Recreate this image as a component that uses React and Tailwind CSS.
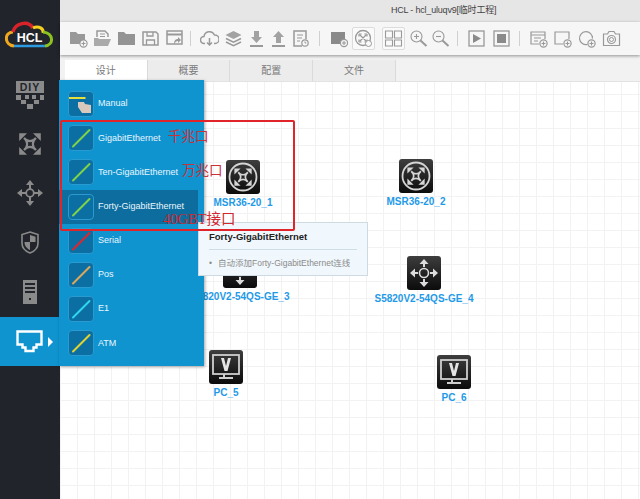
const menuItems = [
  { name: 'Manual', manual: true },
  { name: 'GigabitEthernet', line: '#7ed348' },
  { name: 'Ten-GigabitEthernet', line: '#7ed348' },
  { name: 'Forty-GigabitEthernet', line: '#7ed348', active: true },
  { name: 'Serial', line: '#e0262c' },
  { name: 'Pos', line: '#dda75a' },
  { name: 'E1', line: '#2fd6ee' },
  { name: 'ATM', line: '#e3d32e' },
];

function Tb({ w = 'w-[24px]', box, children }) {
  return (
    <div className={`${w} h-[24px] flex-shrink-0 flex items-center justify-center`}>
      <div className={box ? 'w-[23px] h-[23px] flex items-center justify-center rounded-[2px] border border-[#dcdcdc] bg-[#fafafa]' : 'flex items-center justify-center'}>
        <svg width="19" height="19" viewBox="0 0 19 19" fill="none" stroke="#999999" strokeWidth="1.5">
          {children}
        </svg>
      </div>
    </div>
  );
}

function Sep({ className }) {
  return <div className={`w-px h-[15px] bg-[#d0d0d0] flex-shrink-0 ${className}`} />;
}

const Plus = ({ x = 14.5, y = 14.5 }) => (
  <g>
    <circle cx={x} cy={y} r="3.6" fill="#f6f6f6" stroke="#999999" strokeWidth="1.2" />
    <path d={`M${x - 2} ${y}h4M${x} ${y - 2}v4`} strokeWidth="1.1" />
  </g>
);

function Toolbar() {
  return (
    <div className="h-[33px] bg-[#f6f6f6] flex items-center pl-[6px] shadow-[0_1px_3px_rgba(0,0,0,0.4)] relative z-10">
      <Tb><path d="M1 3h6l2 2h7v10H1z" fill="#999999" stroke="none" /><Plus /></Tb>
      <Tb><path d="M4 8V2h8l3 3v3" /><path d="M7 5h5M7 7.5h5" strokeWidth="1" /><path d="M1 9h4l1 1h9l3 0-3 7H1z" fill="#aaaaaa" stroke="none" /></Tb>
      <Tb><path d="M1 3h6l2 2h9v11H1z" fill="#949494" stroke="none" /></Tb>
      <Tb><path d="M2 3h13l2 2v11H2z" /><path d="M6 3v4h6V3M5.500 16v-5h8v5" strokeWidth="1.3" /></Tb>
      <Tb><rect x="2" y="2" width="15" height="13" /><path d="M2 5.500h15" strokeWidth="2" /><path d="M9 16c0-4 1-6 4-6V8l3 3-3 3v-2c-2 0-3 1-4 4z" fill="#999999" stroke="none" /></Tb>
      <Sep className="ml-[4px] mr-[4px]" />
      <div className="w-[2px] flex-shrink-0" />
      <Tb><path d="M5 14.500H4a3.500 3.500 0 0 1 0-7 5.500 5.500 0 0 1 10.500-1.500A4.200 4.200 0 0 1 15 14.500h-1" /><path d="M9.500 9v7M7 13.500l2.500 2.500 2.500-2.500" /></Tb>
      <Tb><path d="M9.500 2l8 4-8 4-8-4z" fill="#a2a2a2" stroke="none" /><path d="M2 9.500l7.500 3.700 7.500-3.700M2 13l7.500 3.700L17 13" /></Tb>
      <Tb w="w-[22px]"><path d="M7 2h5v6h3l-5.500 6L4 8h3z" fill="#a2a2a2" stroke="none" /><path d="M3 17h13" strokeWidth="2" /></Tb>
      <Tb w="w-[22px]"><path d="M7 14h5V8h3L9.500 2 4 8h3z" fill="#a2a2a2" stroke="none" /><path d="M3 17h13" strokeWidth="2" /></Tb>
      <Tb w="w-[22px]"><path d="M11 17H3V2h12v8" /><path d="M6 6h6M6 9h5M6 12h3" strokeWidth="1" /><circle cx="14" cy="14" r="3.200" strokeWidth="1.2" /><path d="M14 12.500V14h1.300" strokeWidth="1" /></Tb>
      <Sep className="ml-[8px] mr-[6px]" />
      <Tb w="w-[24px]"><rect x="2" y="3" width="14" height="12" fill="#8a8a8a" stroke="none" /><Plus x={15} y={14} /></Tb>
      <div className="w-[1px] flex-shrink-0" />
      <Tb box>
        <circle cx="9" cy="9" r="7.500" strokeWidth="1.3" />
        <path d="M6 6l6 6M12 6l-6 6M5 5h2.600M5 5v2.600M13 5h-2.600M13 5v2.600M5 13h2.600M5 13v-2.600M13 13h-2.600M13 13v-2.600" strokeWidth="1.2" />
        <circle cx="14.500" cy="14.500" r="3" fill="#fafafa" strokeWidth="1" />
      </Tb>
      <div className="w-[6px] flex-shrink-0" />
      <Tb box>
        <path d="M1.500 2h7v7h-7zM10.500 2h7v7h-7zM1.500 11h7v6h-7zM10.500 11h7v6h-7z" strokeWidth="1.1" />
      </Tb>
      <div className="w-[2px] flex-shrink-0" />
      <Tb w="w-[22px]"><circle cx="7.500" cy="7.500" r="5.500" strokeWidth="1.1" /><path d="M5 7.500h5M7.500 5v5" strokeWidth="1.1" /><path d="M11.500 11.500l6 5.500" strokeWidth="2" /></Tb>
      <Tb w="w-[22px]"><circle cx="7.500" cy="7.500" r="5.500" strokeWidth="1.1" /><path d="M5 7.500h5" strokeWidth="1.1" /><path d="M11.500 11.500l6 5.500" strokeWidth="2" /></Tb>
      <Sep className="ml-[6px] mr-[6px]" />
      <Tb><rect x="2" y="2" width="15" height="15" strokeWidth="1.3" /><path d="M6 5l8 4.500-8 4.500z" fill="#8a8a8a" stroke="none" /></Tb>
      <div className="w-[1px] flex-shrink-0" />
      <Tb><rect x="2" y="2" width="15" height="15" strokeWidth="1.3" /><rect x="5" y="5" width="9" height="9" fill="#8a8a8a" stroke="none" /></Tb>
      <Sep className="ml-[6px] mr-[6px]" />
      <Tb><path d="M10 15H2V3h14v7" strokeWidth="1.2" /><path d="M2 6h14M5 9h7M5 12h4" strokeWidth="1" /><Plus /></Tb>
      <Tb><path d="M10 15H2V3h14v7" strokeWidth="1.2" /><Plus /></Tb>
      <Tb><path d="M10.500 15.500A6.500 6.500 0 1 1 15.500 9.500" strokeWidth="1.2" /><Plus /></Tb>
      <Tb w="w-[26px]"><path d="M1.500 5h4l1.500-2.500h5L13.500 5h4v11.500h-16z" strokeWidth="1.2" /><circle cx="9.500" cy="10.500" r="4" strokeWidth="1.2" /><circle cx="9.500" cy="10.500" r="2" strokeWidth="1" /></Tb>
    </div>
  );
}

function Tabs() {
  const tabs = ['设计', '概要', '配置', '文件'];
  return (
    <div className="h-[27px] bg-[#f2f2f2] pt-[5px] pl-[5px] flex items-end border-b border-[#e2e2e2]">
      {tabs.map((tab, i) => (
        <div
          key={tab}
          className={`w-[82.700px] h-full flex items-center justify-center text-[10px] text-[#7a7a7a] border-r border-[#dadada] ${i === 0 ? 'bg-white' : 'bg-[#ececec]'}`}
        >
          {tab}
        </div>
      ))}
    </div>
  );
}

// the four bent arrows shared by the router glyph and the sidebar icon
const BentArrows = ({ color }) => (
  <g fill="none" stroke={color}>
    <path d="M7 7C10.500 10 10.500 14 7 17M17 7C13.500 10 13.500 14 17 17M7 7C10 10.500 14 10.500 17 7M7 17C10 13.500 14 13.500 17 17" strokeWidth="1.800" />
    <path d="M3 3h6.500L3 9.500zM21 3h-6.500L21 9.500zM3 21h6.500L3 14.500zM21 21h-6.500L21 14.500z" fill={color} stroke="none" />
  </g>
);

function DeviceGlyph({ type }) {
  if (type === 'router') {
    return (
      <svg width="34" height="34" viewBox="0 0 34 34" fill="none" stroke="#d5d5d5">
        <circle cx="17" cy="17" r="13.500" strokeWidth="1.800" />
        <g transform="translate(5.500 5.500) scale(0.96)">
          <BentArrows color="#d5d5d5" />
        </g>
      </svg>
    );
  }
  if (type === 'switch') {
    return (
      <svg width="34" height="34" viewBox="0 0 34 34" fill="none" stroke="#dcdcdc">
        <circle cx="17" cy="17" r="4.500" strokeWidth="1.600" />
        <path d="M17 11V7M17 23v4M11 17H7M23 17h4" strokeWidth="2" />
        <path d="M17 3l4.500 5h-9zM17 31l4.500-5h-9zM3 17l5-4.500v9zM31 17l-5-4.500v9z" fill="#dcdcdc" stroke="none" />
      </svg>
    );
  }
  return (
    <svg width="34" height="34" viewBox="0 0 34 34" fill="none" stroke="#cfcfcf">
      <rect x="4" y="5" width="26" height="19" strokeWidth="1.800" />
      <path d="M12 8h3l2 8 2-8h3l-3.500 13h-3z" fill="#e4e4e4" stroke="none" />
      <path d="M15 24v3M10 28h14" strokeWidth="2" />
    </svg>
  );
}

function DeviceNode({ type, label, className }) {
  return (
    <div className={`absolute w-[110px] flex flex-col items-center ${className}`}>
      <div className="w-[34px] h-[34px] rounded-[3px] bg-linear-to-b from-[#3e3e3e] to-[#0c0c0c] flex items-center justify-center">
        <DeviceGlyph type={type} />
      </div>
      <div className="mt-[3px] text-[10px] leading-[12px] font-bold text-[#1f9ae8] whitespace-nowrap">{label}</div>
    </div>
  );
}

function Sidebar() {
  return (
    <div className="w-[60px] h-full flex-shrink-0 bg-[#21252b]">
      <div className="h-[70px] flex items-start justify-center pt-[21px] pr-[2px]">
        <svg width="48" height="28" viewBox="0 0 48 28" fill="none">
          <path d="M9 25C-1 24-1 11 8 11" stroke="#f0a91e" strokeWidth="3" />
          <path d="M8 11C10 2 23 -1 28 7" stroke="#d8232a" strokeWidth="3.500" />
          <path d="M28 7C34 4 39 8 38 12" stroke="#f4d21f" strokeWidth="3" />
          <path d="M38 11C49 12 49 24 40 25" stroke="#8cc220" strokeWidth="3" />
          <path d="M9 25h31" stroke="#2d9be0" strokeWidth="2.500" />
          <text x="24.500" y="21" textAnchor="middle" fontSize="12.500" fontWeight="700" fill="#fff" fontFamily="Liberation Sans, sans-serif">HCL</text>
        </svg>
      </div>
      <div className="h-[49.400px] flex items-center justify-center">
        <svg width="30" height="30" viewBox="0 0 30 30">
          <rect x="1" y="1" width="28" height="12" fill="#8a8a8a" />
          <text x="15" y="11" textAnchor="middle" fontSize="10.500" fontWeight="700" letterSpacing="1" fill="#21252b" fontFamily="Liberation Sans, sans-serif">DIY</text>
          <path d="M1 15h5v5H1zM10 15h4v4h-4zM17 15h4v4h-4zM25 15h4v5h-4zM6 20h5v4H6zM19 20h5v4h-5zM12 24h6v5h-6z" fill="#8a8a8a" />
        </svg>
      </div>
      <div className="h-[49.400px] flex items-center justify-center">
        <svg width="24" height="24" viewBox="2 2 20 20">
          <BentArrows color="#8a8a8a" />
        </svg>
      </div>
      <div className="h-[49.400px] flex items-center justify-center">
        <svg width="26" height="26" viewBox="0 0 26 26" fill="none" stroke="#8a8a8a">
          <circle cx="13" cy="13" r="3.800" strokeWidth="1.800" />
          <path d="M13 9V5M13 17v4M9 13H5M17 13h4" strokeWidth="2" />
          <path d="M13 0l4 5H9zM13 26l4-5H9zM0 13l5-4v8zM26 13l-5-4v8z" fill="#8a8a8a" stroke="none" />
        </svg>
      </div>
      <div className="h-[49.400px] flex items-center justify-center">
        <svg width="18" height="23" viewBox="0 0 18 23" fill="none">
          <path d="M9 1l8 2.500V12c0 5-4 8.500-8 10-4-1.500-8-5-8-10V3.500z" stroke="#8a8a8a" strokeWidth="1.600" />
          <path d="M9 4l5.500 1.800V11H9zM9 11H3.500c0 4 2.500 6.500 5.500 8z" fill="#8a8a8a" />
        </svg>
      </div>
      <div className="h-[49.400px] flex items-center justify-center">
        <svg width="14" height="24" viewBox="0 0 14 24">
          <path fillRule="evenodd" d="M0 0h14v24H0zM2 3v2h10V3zM2 7v2h10V7zM2 11v2h10v-2zM6 18v2h2v-2z" fill="#8a8a8a" />
        </svg>
      </div>
      <div className="h-[49.400px] bg-[#0f94d0] flex items-center pl-[16px] gap-[5px]">
        <svg width="27" height="23" viewBox="0 0 27 23" fill="none" stroke="#fff" strokeWidth="2.400">
          <path d="M1.500 1.500h24v13h-5v3h-3v3.500h-8v-3.500h-3v-3h-5z" />
        </svg>
        <div className="w-0 h-0 border-y-[5px] border-y-transparent border-l-[5px] border-l-white" />
      </div>
    </div>
  );
}

function MenuIcon({ item }) {
  return (
    <div className="w-[26px] h-[26px] rounded-[4px] bg-[#0b6fa3] border border-[#2a9bd0] flex-shrink-0 overflow-hidden">
      <svg width="24" height="24" viewBox="0 0 24 24" fill="none">
        {item.manual ? (
          <g>
            <path d="M0 6h16.500" stroke="#e8df3a" strokeWidth="2" />
            <path d="M9 10h6l1 2 6 1v8H13l-4-6z" fill="#d9c8bc" />
          </g>
        ) : (
          <path d="M4 20.500L20.500 4" stroke={item.line} strokeWidth="2" strokeLinecap="round" />
        )}
      </svg>
    </div>
  );
}

function Flyout() {
  return (
    <div className="absolute left-[59px] top-[80px] w-[145px] h-[286px] bg-[#0f94d0] shadow-[1px_1px_3px_rgba(0,0,0,0.35)] pt-[7px] z-20">
      {menuItems.map((item) => (
        <div
          key={item.name}
          className={`h-[34.200px] flex items-center gap-[4px] pl-[9px] mr-[6px] text-[9px] text-[#e9f6fc] whitespace-nowrap ${item.active ? 'bg-[#0c6d9e]' : ''}`}
        >
          <MenuIcon item={item} />
          <span>{item.name}</span>
        </div>
      ))}
    </div>
  );
}

export default function App() {
  return (
    <div className="relative w-[640px] h-[499px] overflow-hidden flex bg-white font-['Liberation_Sans','Noto_Sans_CJK_SC',sans-serif]">
      <Sidebar />
      <div className="flex-1 flex flex-col min-w-0">
        <div className="h-[22px] bg-[#e6e6e6] pl-[331px] flex items-center text-[9px] tracking-[-0.200px] text-[#444] whitespace-nowrap">
          HCL - hcl_uluqv9[临时工程]
        </div>
        <Toolbar />
        <Tabs />
        <div className="relative flex-1 bg-white bg-[linear-gradient(#f2f2f2_1px,transparent_1px),linear-gradient(90deg,#f2f2f2_1px,transparent_1px)] bg-[size:17px_17px] bg-[position:0px_12px]">
          <DeviceNode type="router" label="MSR36-20_1" className="left-[128px] top-[78px]" />
          <DeviceNode type="router" label="MSR36-20_2" className="left-[301px] top-[77px]" />
          <DeviceNode type="switch" label="S5820V2-54QS-GE_3" className="left-[125px] top-[172px]" />
          <DeviceNode type="switch" label="S5820V2-54QS-GE_4" className="left-[309px] top-[174px]" />
          <DeviceNode type="pc" label="PC_5" className="left-[111px] top-[268px]" />
          <DeviceNode type="pc" label="PC_6" className="left-[339px] top-[273px]" />
        </div>
      </div>

      <Flyout />

      {/* tooltip */}
      <div className="absolute left-[198px] top-[222px] w-[170px] h-[54px] bg-[#f1f8fd] border border-[#cfdbe2] px-[10px] pt-[8px] z-30">
        <div className="text-[9.500px] leading-[12px] font-bold text-[#222]">Forty-GigabitEthernet</div>
        <div className="mt-[6px] h-px bg-[#cfdde6]" />
        <div className="mt-[7px] text-[8.500px] leading-[12px] text-[#8a8a8a] whitespace-nowrap">
          <span className="mr-[6px]">•</span>自动添加Forty-GigabitEthernet连线
        </div>
      </div>

      {/* red annotations */}
      <div className="absolute left-[60px] top-[120px] w-[235px] h-[111px] border-2 border-[#e0242a] rounded-[2px] z-40" />
      <div className="absolute left-[168px] top-[128px] text-[13.500px] leading-[18px] text-[#c8323a] z-40">千兆口</div>
      <div className="absolute left-[182px] top-[162px] text-[13.500px] leading-[18px] text-[#c8323a] z-40">万兆口</div>
      <div className="absolute left-[163px] top-[210px] text-[14.500px] leading-[18px] text-[#d0282e] z-40 font-['Liberation_Serif','Noto_Sans_CJK_SC',serif]">40GBT接口</div>
    </div>
  );
}
